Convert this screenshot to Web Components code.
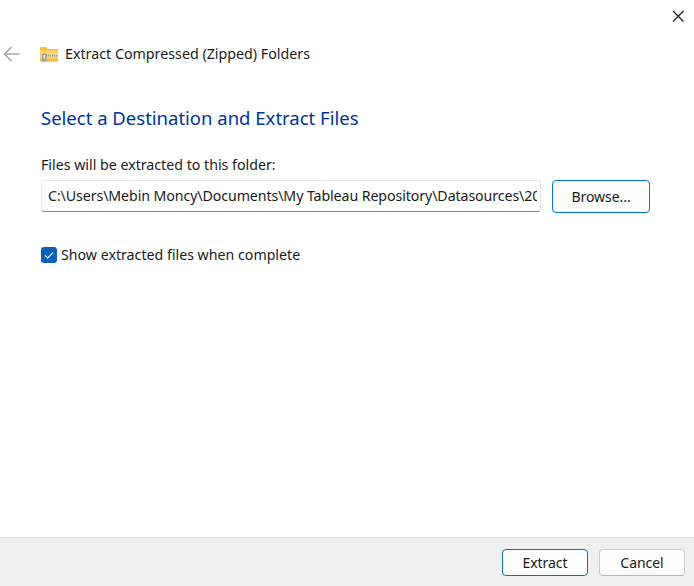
<!DOCTYPE html>
<html lang="en"><head><meta charset="utf-8"><title>Extract</title>
<style>
html,body{margin:0;padding:0;background:#fff}
</style></head><body>
<wizard-dialog></wizard-dialog>
<script>
const FONT = '"Noto Sans","Open Sans","Liberation Sans",sans-serif';
class WinButton extends HTMLElement{
  constructor(){super();this.attachShadow({mode:'open'}).innerHTML=`<style>
  :host{display:flex;align-items:center;justify-content:center;box-sizing:border-box;width:86px;height:27px;background:#fdfdfd;border:1px solid #cfcfcf;border-bottom-color:#b5b5b5;border-radius:4px;font:14px/18px ${FONT};letter-spacing:-.05px;color:#1a1a1a}
  :host([primary]){border:1.5px solid var(--edge,#0f6cbd)}
  </style><slot></slot>`;}
}
class WinCheck extends HTMLElement{
  constructor(){super();this.attachShadow({mode:'open'}).innerHTML=`<style>
  :host{display:flex;align-items:center;gap:4px;font:14.2px/18px ${FONT};color:#1a1a1a}
  .b{width:16px;height:16px;border-radius:3px;background:#0a60b6;display:flex;flex:none}
  </style><span class="b"><svg width="16" height="16" viewBox="0 0 16 16"><path d="M4 8.4l2.7 2.6L12 5.6" fill="none" stroke="#fff" stroke-width="1.1"/></svg></span><slot></slot>`;}
}
class PathField extends HTMLElement{
  constructor(){super();this.attachShadow({mode:'open'}).innerHTML=`<style>
  :host{display:block;box-sizing:border-box;flex:none;width:500px;height:32px;padding:0 3px 0 6px;background:#fff;border:1px solid #e8e8e8;border-bottom:1.5px solid #868686;border-radius:3px;font:14.2px/30px ${FONT};letter-spacing:-.09px;color:#1a1a1a}
  .clip{display:block;overflow:hidden;white-space:nowrap}
  </style><span class="clip"><slot></slot></span>`;}
}
class WizardHeader extends HTMLElement{
  constructor(){super();this.attachShadow({mode:'open'}).innerHTML=`<style>
  :host{display:flex;align-items:center;height:16px;padding-left:3px;font:14.25px/18px ${FONT};color:#1a1a1a}
  .back{margin-right:20px;flex:none}.folder{margin-right:7px;flex:none}
  </style>
  <svg class="back" width="17" height="16" viewBox="0 0 17 16"><path d="M16.5 8H1.5M8.5 1L1.5 8l7 7" fill="none" stroke="#a8a8a8" stroke-width="1.6"/></svg>
  <svg class="folder" width="18" height="16" viewBox="0 0 18 16">
    <path d="M0 2a1 1 0 0 1 1-1h5l2 2h10v3H0z" fill="#f4bb34"/>
    <path d="M0 4.5h18v10a1 1 0 0 1-1 1H1a1 1 0 0 1-1-1z" fill="#fdd66f"/>
    <path d="M0 12.5h18v2a1 1 0 0 1-1 1H1a1 1 0 0 1-1-1z" fill="#f3bd45"/>
    <rect x="0" y="8" width="18" height="3.5" fill="#e6d49b"/>
    <path d="M6 9.7h12" stroke="#8f8f86" stroke-width="1.6" stroke-dasharray="1 1"/>
    <rect x="2" y="7.5" width="4.5" height="8" rx=".8" fill="#a3a39d"/>
    <rect x="3.4" y="9" width="1.7" height="3.5" fill="#ecece7"/>
  </svg>
  <slot></slot>`;}
}
class WizardDialog extends HTMLElement{
  constructor(){super();this.attachShadow({mode:'open'}).innerHTML=`<style>
  :host{display:flex;flex-direction:column;width:694px;height:586px;overflow:hidden;background:#fff;font:14.2px/18px ${FONT};color:#1a1a1a}
  .top{display:flex;justify-content:flex-end;height:46px;padding:9px 9px 0 0;box-sizing:border-box}
  .main{flex:1;display:flex;flex-direction:column;padding:0 44px 0 41px}
  h1{margin:44px 0 0;font:400 18.5px/24px ${FONT};color:#003399;height:24px}
  .lab{margin-top:26px;height:18px}
  .row{display:flex;gap:11px;margin-top:6px;align-items:flex-start}
  .row win-button{width:98px;height:33px;--edge:#0078d4}
  win-check{margin-top:33px}
  .foot{display:flex;justify-content:flex-end;gap:11px;height:49px;box-sizing:border-box;padding:11px 9px 0 0;background:#f0f0f0;border-top:1px solid #dfdfdf}
  </style>
  <div class="top"><svg width="14" height="14" viewBox="0 0 14 14"><path d="M2 2l10.5 10.5M12.5 2L2 12.5" stroke="#1a1a1a" stroke-width="1.2" fill="none"/></svg></div>
  <wizard-header>Extract Compressed (Zipped) Folders</wizard-header>
  <div class="main">
    <h1>Select a Destination and Extract Files</h1>
    <div class="lab">Files will be extracted to this folder:</div>
    <div class="row">
      <path-field>C:\\Users\\Mebin Moncy\\Documents\\My Tableau Repository\\Datasources\\2024</path-field>
      <win-button primary>Browse...</win-button>
    </div>
    <win-check>Show extracted files when complete</win-check>
  </div>
  <div class="foot"><win-button primary>Extract</win-button><win-button>Cancel</win-button></div>`;}
}
customElements.define('win-button',WinButton);
customElements.define('win-check',WinCheck);
customElements.define('path-field',PathField);
customElements.define('wizard-header',WizardHeader);
customElements.define('wizard-dialog',WizardDialog);
</script>
</body></html>
